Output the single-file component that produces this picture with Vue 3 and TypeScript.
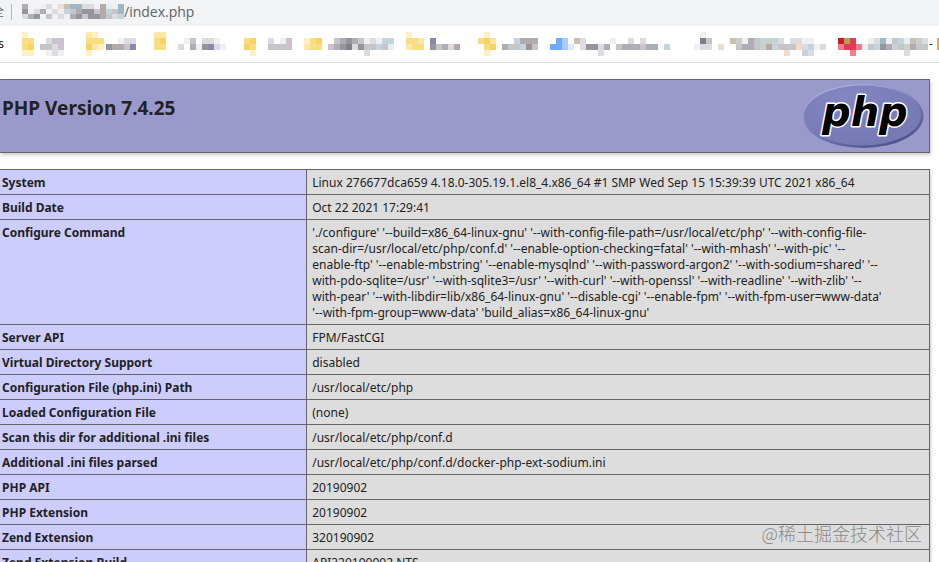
<script setup lang="ts">
interface Mosaic {
  width: number
  rows: string[]
}
interface Bookmark {
  name: string
  gap: number
  icon: Mosaic
  space: number
  label: Mosaic
}
interface InfoRow {
  label: string
  lines: string[]
}
interface Cell {
  x: number
  y: number
  fill: string
}

const palette: Record<string, string> = {
  y: '#f9dd80', Y: '#f6d365', l: '#fdf0c4', k: '#fbe7a6',
  a: '#f0eff2', b: '#dcdce0', c: '#c6c5ca', d: '#aeadb3', e: '#96949c', f: '#807e88',
  p: '#cfc2d0', v: '#8e88a8', V: '#dcd8ee', t: '#c4d3dc', T: '#9fb6c4', i: '#e2f0f5',
  s: '#eedccf', o: '#cbbfb1', m: '#b7a9a5', g: '#c9d0c8',
  u: '#72aafb', U: '#aacbfc', w: '#dce9fe',
  r: '#d0142c', R: '#e03c55', q: '#ef7d8c', Q: '#b3a056',
}

function cells(mosaic: Mosaic, height: number): Cell[] {
  return mosaic.rows.flatMap((row, y) =>
    [...row].flatMap((key, x) => (palette[key] ? [{ x: x * 6, y: y * height, fill: palette[key] }] : [])),
  )
}

const host: Mosaic = {
  width: 102,
  rows: ['da.ab.soTTbbamiaT', 'eabdabatcdeecmtcT', 'bde.cabadeceedcbt'],
}

const bookmarks: Bookmark[] = [
  { name: 'Bookmark 1', gap: 14, icon: { width: 12, rows: ['l', 'yy', 'yY', 'll'] }, space: 6, label: { width: 24, rows: ['', '.bcp', 'ccbp', '.aba'] } },
  { name: 'Bookmark 2', gap: 22, icon: { width: 18, rows: ['kl', 'yyy', 'Ykl', 'l'] }, space: 2, label: { width: 30, rows: ['', '..abV', 'emdcv', ''] } },
  { name: 'Bookmark 3', gap: 18, icon: { width: 12, rows: ['kk', 'yY', 'yy', ''] }, space: 12, label: { width: 48, rows: ['', '.ac.bba', 'b.daevVa', ''] } },
  { name: 'Bookmark 4', gap: 18, icon: { width: 12, rows: ['', 'yY', 'Yy', '.l'] }, space: 12, label: { width: 24, rows: ['', 'b.ap', 'cccp', ''] } },
  { name: 'Bookmark 5', gap: 12, icon: { width: 18, rows: ['', 'lyY', 'kyy', ''] }, space: 6, label: { width: 66, rows: ['', '.cdedcabatt', 'pdefbecctci', '......b'] } },
  { name: 'Bookmark 6', gap: 12, icon: { width: 18, rows: ['l', 'yyk', 'kyy', ''] }, space: 6, label: { width: 30, rows: ['', 'v', 'ecdbm', ''] } },
  { name: 'Bookmark 7', gap: 18, icon: { width: 18, rows: ['.l', 'yYk', '.yY', '.l'] }, space: 6, label: { width: 36, rows: ['', '..tdmd', 'dcctec', ''] } },
  { name: 'Bookmark 8', gap: 12, icon: { width: 24, rows: ['', '.uU', 'uuUw', ''] }, space: 0, label: { width: 96, rows: ['', 'ob....a..b.b', '.beebd.cdddpdd.t', '....b'] } },
  { name: 'Bookmark 9', gap: 24, icon: { width: 18, rows: ['.a', '.fc', 'abb', ''] }, space: 6, label: { width: 108, rows: ['', '..ogadctgtb.bbaa', 's..cddcgmtcccsbtab', '...........s..tb'] } },
  { name: 'Bookmark 10', gap: 12, icon: { width: 24, rows: ['', 'rQR', 'qRRq', '..q'] }, space: 0, label: { width: 66, rows: ['', '.abTactiogb', 'actedtcgdccd', '.......b'] } },
]

const info: InfoRow[] = [
  { label: 'System', lines: ['Linux 276677dca659 4.18.0-305.19.1.el8_4.x86_64 #1 SMP Wed Sep 15 15:39:39 UTC 2021 x86_64'] },
  { label: 'Build Date', lines: ['Oct 22 2021 17:29:41'] },
  {
    label: 'Configure Command',
    lines: [
      "'./configure' '--build=x86_64-linux-gnu' '--with-config-file-path=/usr/local/etc/php' '--with-config-file-",
      "scan-dir=/usr/local/etc/php/conf.d' '--enable-option-checking=fatal' '--with-mhash' '--with-pic' '--",
      "enable-ftp' '--enable-mbstring' '--enable-mysqlnd' '--with-password-argon2' '--with-sodium=shared' '--",
      "with-pdo-sqlite=/usr' '--with-sqlite3=/usr' '--with-curl' '--with-openssl' '--with-readline' '--with-zlib' '--",
      "with-pear' '--with-libdir=lib/x86_64-linux-gnu' '--disable-cgi' '--enable-fpm' '--with-fpm-user=www-data'",
      "'--with-fpm-group=www-data' 'build_alias=x86_64-linux-gnu'",
    ],
  },
  { label: 'Server API', lines: ['FPM/FastCGI'] },
  { label: 'Virtual Directory Support', lines: ['disabled'] },
  { label: 'Configuration File (php.ini) Path', lines: ['/usr/local/etc/php'] },
  { label: 'Loaded Configuration File', lines: ['(none)'] },
  { label: 'Scan this dir for additional .ini files', lines: ['/usr/local/etc/php/conf.d'] },
  { label: 'Additional .ini files parsed', lines: ['/usr/local/etc/php/conf.d/docker-php-ext-sodium.ini'] },
  { label: 'PHP API', lines: ['20190902'] },
  { label: 'PHP Extension', lines: ['20190902'] },
  { label: 'Zend Extension', lines: ['320190902'] },
  { label: 'Zend Extension Build', lines: ['API320190902,NTS'] },
]
</script>

<template>
  <div class="window">
    <div class="address">
      <span class="clip security"><span>全</span></span>
      <span class="divider"></span>
      <svg class="host" :width="host.width" height="15" aria-hidden="true" shape-rendering="crispEdges">
        <rect v-for="(c, i) in cells(host, 5)" :key="i" :x="c.x" :y="c.y" width="6" height="5" :fill="c.fill" />
      </svg>
      <span class="path">/index.php</span>
    </div>

    <nav class="bookmarks">
      <span class="clip app"><span>s</span></span>
      <a
        v-for="b in bookmarks"
        :key="b.name"
        href="#"
        :aria-label="b.name"
        class="bookmark"
        :style="{ marginLeft: b.gap + 'px', gap: b.space + 'px' }"
      >
        <svg v-for="(m, n) in [b.icon, b.label]" :key="n" :width="m.width" height="24" shape-rendering="crispEdges">
          <rect v-for="(c, i) in cells(m, 6)" :key="i" :x="c.x" :y="c.y" width="6" height="6" :fill="c.fill" />
        </svg>
      </a>
      <span class="more">-</span>
      <span class="edge"></span>
    </nav>

    <main class="page">
      <header class="banner">
        <h1>PHP Version 7.4.25</h1>
        <a href="#" aria-label="PHP">
          <svg class="logo" width="122" height="66" viewBox="0 0 122 66">
            <defs>
              <linearGradient id="rim" x1="0.2" y1="0" x2="0.8" y2="1">
                <stop offset="0" stop-color="#b4b6e2" />
                <stop offset="0.45" stop-color="#7f82bb" />
                <stop offset="1" stop-color="#484b85" />
              </linearGradient>
              <radialGradient id="face" cx="0.35" cy="0.2" r="0.9">
                <stop offset="0" stop-color="#8386c0" />
                <stop offset="1" stop-color="#7377b2" />
              </radialGradient>
            </defs>
            <ellipse cx="61" cy="33" rx="60.5" ry="32" fill="url(#rim)" />
            <ellipse cx="60.5" cy="32.5" rx="58.5" ry="30" fill="url(#face)" />
            <text class="wordmark" x="20" y="43">php</text>
          </svg>
        </a>
      </header>

      <table class="info">
        <tbody>
          <tr v-for="row in info" :key="row.label">
            <th scope="row">{{ row.label }}</th>
            <td><span v-for="line in row.lines" :key="line" class="line">{{ line }}</span></td>
          </tr>
        </tbody>
      </table>
    </main>

    <div class="watermark">@稀土掘金技术社区</div>
  </div>
</template>

<style>
body {
  margin: 0;
  background: #fff;
}
</style>

<style scoped>
.window {
  position: relative;
  height: 100vh;
  overflow: hidden;
  color: #222;
  font-family: "Noto Sans", "Open Sans", "Noto Sans CJK SC", sans-serif;
  font-size: 12px;
  line-height: 16px;
}
.address {
  display: flex;
  align-items: center;
  height: 26px;
  padding-bottom: 3px;
  box-sizing: border-box;
  background: #f1f3f4;
  color: #5f6368;
  font-family: "Open Sans", "Noto Sans CJK SC", sans-serif;
  font-size: 14px;
}
.clip {
  display: flex;
  justify-content: flex-end;
  overflow: hidden;
  flex: none;
}
.security {
  width: 4px;
  font-size: 12px;
}
.divider {
  width: 1px;
  height: 16px;
  margin: 0 10px 0 7px;
  background: #b4b7ba;
}
.host,
.bookmark svg {
  display: block;
  flex: none;
}
.bookmarks {
  display: flex;
  align-items: center;
  height: 36px;
  border-bottom: 1px solid #d8d9da;
  overflow: hidden;
}
.app {
  width: 4px;
  margin-right: 4px;
}
.bookmark {
  display: flex;
  flex: none;
}
.more {
  margin: 0 4px 0 1px;
}
.edge {
  flex: none;
  width: 4px;
  height: 12px;
  background: #e8a84c;
}
.page {
  padding: 16px 9px 0 0;
}
.banner {
  display: flex;
  justify-content: space-between;
  align-items: flex-start;
  height: 74px;
  box-sizing: border-box;
  padding: 3px 5px 0 2px;
  border: 1px solid #666;
  border-left: 0;
  background: #9999cc;
  box-shadow: 1px 2px 3px #ccc;
}
h1 {
  margin: 13px 0 0;
  font-size: 19px;
  line-height: 24px;
  font-weight: 700;
}
.logo {
  display: block;
}
.wordmark {
  font: italic bold 40px "DejaVu Sans", sans-serif;
  fill: #000;
  stroke: #fff;
  stroke-width: 3px;
  stroke-linejoin: round;
  paint-order: stroke;
}
.info {
  width: 100%;
  margin-top: 16px;
  border-collapse: collapse;
  table-layout: fixed;
  box-shadow: 1px 2px 3px #ccc;
}
th,
td {
  border: 1px solid #666;
  padding: 5px 5px 3px;
  vertical-align: baseline;
  text-align: left;
}
th {
  width: 33%;
  box-sizing: border-box;
  padding-left: 2px;
  border-left: 0;
  background: #ccccff;
  font-weight: 700;
}
td {
  background: #ddd;
}
.line {
  display: block;
  white-space: nowrap;
}
.watermark {
  position: absolute;
  right: 17px;
  bottom: 16px;
  color: #8a8a8a;
  font-family: "Noto Sans CJK SC", sans-serif;
  font-size: 18px;
  font-weight: 300;
  line-height: 26px;
}
</style>
